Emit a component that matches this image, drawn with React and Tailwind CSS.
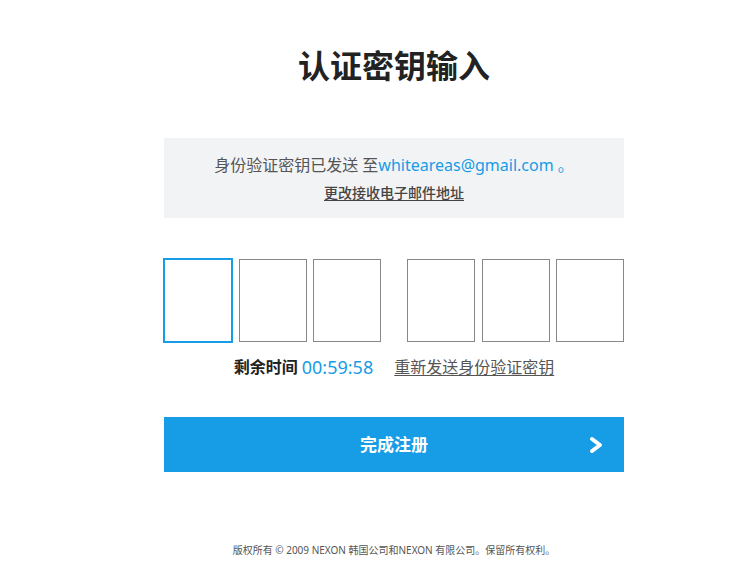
import React, { useState } from "react";

const font = "font-['Noto_Sans','Noto_Sans_CJK_SC',sans-serif]";

const CodeBox = ({ focused, value, onChange }) => (
  <input
    type="text"
    maxLength={1}
    value={value}
    onChange={onChange}
    className={
      "w-[68px] h-[83px] bg-white border border-[#888] text-center text-[28px] text-[#222] outline-none " +
      (focused ? "outline-2 outline-solid outline-[#179ce6] outline-offset-[-1px]" : "")
    }
  />
);

const App = () => {
  const [code, setCode] = useState(["", "", "", "", "", ""]);

  const setDigit = (i, v) => {
    const next = [...code];
    next[i] = v;
    setCode(next);
  };

  return (
    <div className={`min-h-[588px] bg-white ${font}`}>
      <div className="w-[460px] ml-[164px] pt-[42px]">
        <h1 className="text-center text-[32px] leading-[48px] font-bold text-[#222]">
          认证密钥输入
        </h1>

        <div className="mt-[48px] h-[80px] bg-[#f2f3f5] pt-[15px] text-center">
          <p className="text-[16px] leading-[24px] text-[#555]">
            身份验证密钥已发送 至<span className="text-[#179ce6]">whiteareas@gmail.com</span>
            <span className="text-[#179ce6]"> 。</span>
          </p>
          <a
            href="#"
            className="mt-[6px] inline-block text-[14px] leading-[20px] font-medium text-[#444] underline underline-offset-2"
          >
            更改接收电子邮件地址
          </a>
        </div>

        <div className="mt-[41px] flex justify-between">
          <div className="flex gap-[6.5px]">
            {[0, 1, 2].map((i) => (
              <CodeBox
                key={i}
                focused={i === 0}
                value={code[i]}
                onChange={(e) => setDigit(i, e.target.value)}
              />
            ))}
          </div>
          <div className="flex gap-[6.5px]">
            {[3, 4, 5].map((i) => (
              <CodeBox
                key={i}
                value={code[i]}
                onChange={(e) => setDigit(i, e.target.value)}
              />
            ))}
          </div>
        </div>

        <div className="mt-[13px] flex justify-center items-center text-[16px] leading-[24px]">
          <span className="font-bold text-[#222]">剩余时间</span>
          <span className="ml-[4px] text-[18px] text-[#179ce6]">00:59:58</span>
          <a href="#" className="ml-[21px] text-[#555] underline underline-offset-2">
            重新发送身份验证密钥
          </a>
        </div>

        <button className="mt-[38px] w-full h-[55px] bg-[#179ce6] grid grid-cols-[1fr_auto_1fr] items-center text-white">
          <span />
          <span className="text-[17px] font-bold">完成注册</span>
          <span className="justify-self-end pr-[21px] flex">
            <svg width="14" height="18" viewBox="0 0 14 18" fill="none">
              <polyline
                points="3,3 11,9 3,15"
                stroke="white"
                strokeWidth="4"
                strokeLinecap="round"
                strokeLinejoin="round"
              />
            </svg>
          </span>
        </button>

        <p className="mt-[71px] text-center text-[10px] leading-[15px] text-[#555]">
          版权所有 © 2009 NEXON 韩国公司和NEXON 有限公司。保留所有权利。
        </p>
      </div>
    </div>
  );
};

export default App;
